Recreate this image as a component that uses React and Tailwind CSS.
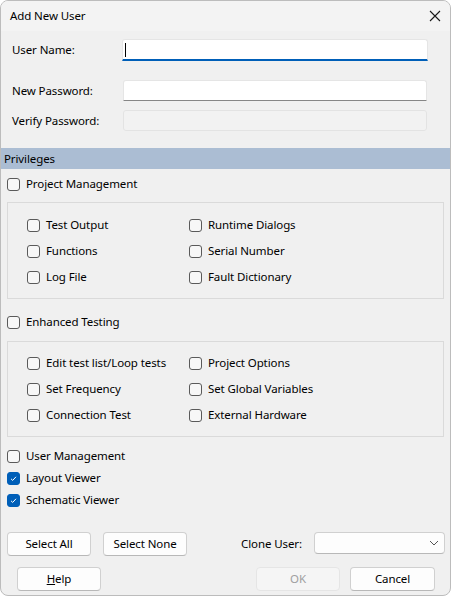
import React from 'react';

const font = { fontFamily: '"Noto Sans", "Segoe UI", sans-serif' };

const Box = ({ checked }) => (
  <span
    className={`w-[13px] h-[13px] rounded-[3px] flex items-center justify-center shrink-0 ${
      checked ? 'bg-[#005fb8] border border-[#005fb8]' : 'bg-[#f7f7f7] border border-[#5a5a5a]'
    }`}
  >
    {checked && (
      <svg width="9" height="9" viewBox="0 0 9 9">
        <path d="M2 4.8 L3.7 6.4 L7 2.8" fill="none" stroke="#ffffff" strokeWidth="1" />
      </svg>
    )}
  </span>
);

const Check = ({ label, checked, h = 'h-[20px]' }) => (
  <div className={`flex items-center gap-[6px] ${h}`}>
    <Box checked={checked} />
    <span>{label}</span>
  </div>
);

const Btn = ({ children, disabled, w = 'w-[84px]' }) => (
  <button
    className={`${w} h-[24px] rounded-[4px] border flex items-center justify-center ${
      disabled
        ? 'bg-[#f5f5f5] border-[#e5e5e5] text-[#a0a0a0]'
        : 'bg-[#fdfdfd] border-[#d0d0d0] border-b-[#b8b8b8] text-black'
    }`}
  >
    {children}
  </button>
);

const Group = ({ left, right, pt }) => (
  <div className={`mx-[6px] border border-[#dadada] pl-[19px] pb-[8px] ${pt}`}>
    <div className="grid grid-cols-[162px_1fr] auto-rows-[26px]">
      {left.map((l, i) => (
        <React.Fragment key={l}>
          <Check label={l} h="h-[26px]" />
          <Check label={right[i]} h="h-[26px]" />
        </React.Fragment>
      ))}
    </div>
  </div>
);

export default function App() {
  return (
    <div
      className="w-[451px] h-[596px] bg-[#f0f0f0] border border-[#bcbcbc] rounded-[8px] overflow-hidden flex flex-col text-[11.5px] tracking-[-0.1px] text-black"
      style={font}
    >
      <div className="h-[30px] shrink-0 bg-[#f3f3f3] flex items-center justify-between pl-[9px] pr-[9px]">
        <span>Add New User</span>
        <svg width="12" height="12" viewBox="0 0 12 12">
          <path d="M1 1 L11 11 M11 1 L1 11" stroke="#1a1a1a" strokeWidth="1.1" />
        </svg>
      </div>

      <div className="flex items-center h-[22px] mt-[8px]">
        <span className="w-[121px] pl-[11px]">User Name:</span>
        <div className="w-[306px] h-[22px] bg-white border border-[#e5e5e5] border-b-2 border-b-[#005fb8] rounded-t-[3px] flex items-center pl-[2px]">
          <span className="w-px h-[14px] bg-black" />
        </div>
      </div>

      <div className="flex items-center h-[21px] mt-[19px]">
        <span className="w-[122px] pl-[11px]">New Password:</span>
        <div className="w-[304px] h-[21px] bg-white border border-[#e5e5e5] border-b-[#868686] rounded-t-[3px]" />
      </div>

      <div className="flex items-center h-[21px] mt-[9px]">
        <span className="w-[122px] pl-[11px]">Verify Password:</span>
        <div className="w-[304px] h-[21px] bg-[#f2f2f2] border border-[#e3e3e3] rounded-[3px]" />
      </div>

      <div className="h-[21px] mt-[17px] bg-[#abbdd3] flex items-center pl-[3px]">Privileges</div>

      <div className="mt-[5px] pl-[6px]">
        <Check label="Project Management" />
      </div>

      <div className="mt-[8px]">
        <Group
          pt="pt-[9px]"
          left={['Test Output', 'Functions', 'Log File']}
          right={['Runtime Dialogs', 'Serial Number', 'Fault Dictionary']}
        />
      </div>

      <div className="mt-[13px] pl-[6px]">
        <Check label="Enhanced Testing" />
      </div>

      <div className="mt-[9px]">
        <Group
          pt="pt-[8px]"
          left={['Edit test list/Loop tests', 'Set Frequency', 'Connection Test']}
          right={['Project Options', 'Set Global Variables', 'External Hardware']}
        />
      </div>

      <div className="mt-[8px] pl-[6px] flex flex-col">
        <Check label="User Management" h="h-[22px]" />
        <Check label="Layout Viewer" checked h="h-[22px]" />
        <Check label="Schematic Viewer" checked h="h-[22px]" />
      </div>

      <div className="mt-[21px] flex items-center pl-[6px] pr-[5px]">
        <Btn>Select All</Btn>
        <div className="ml-[12px]">
          <Btn>Select None</Btn>
        </div>
        <span className="ml-auto mr-[12px]">Clone User:</span>
        <div className="w-[131px] h-[22px] bg-[#fdfdfd] border border-[#d0d0d0] border-b-[#b8b8b8] rounded-[4px] flex items-center justify-end pr-[5px] -mt-[2px]">
          <svg width="10" height="6" viewBox="0 0 10 6">
            <path d="M1 1 L5 5 L9 1" fill="none" stroke="#555" strokeWidth="1" />
          </svg>
        </div>
      </div>

      <div className="mt-[11px] flex items-center pl-[16px] pr-[15px]">
        <Btn>
          <span className="underline">H</span>elp
        </Btn>
        <div className="ml-auto">
          <Btn disabled>OK</Btn>
        </div>
        <div className="ml-[10px]">
          <Btn w="w-[85px]">Cancel</Btn>
        </div>
      </div>
    </div>
  );
}
